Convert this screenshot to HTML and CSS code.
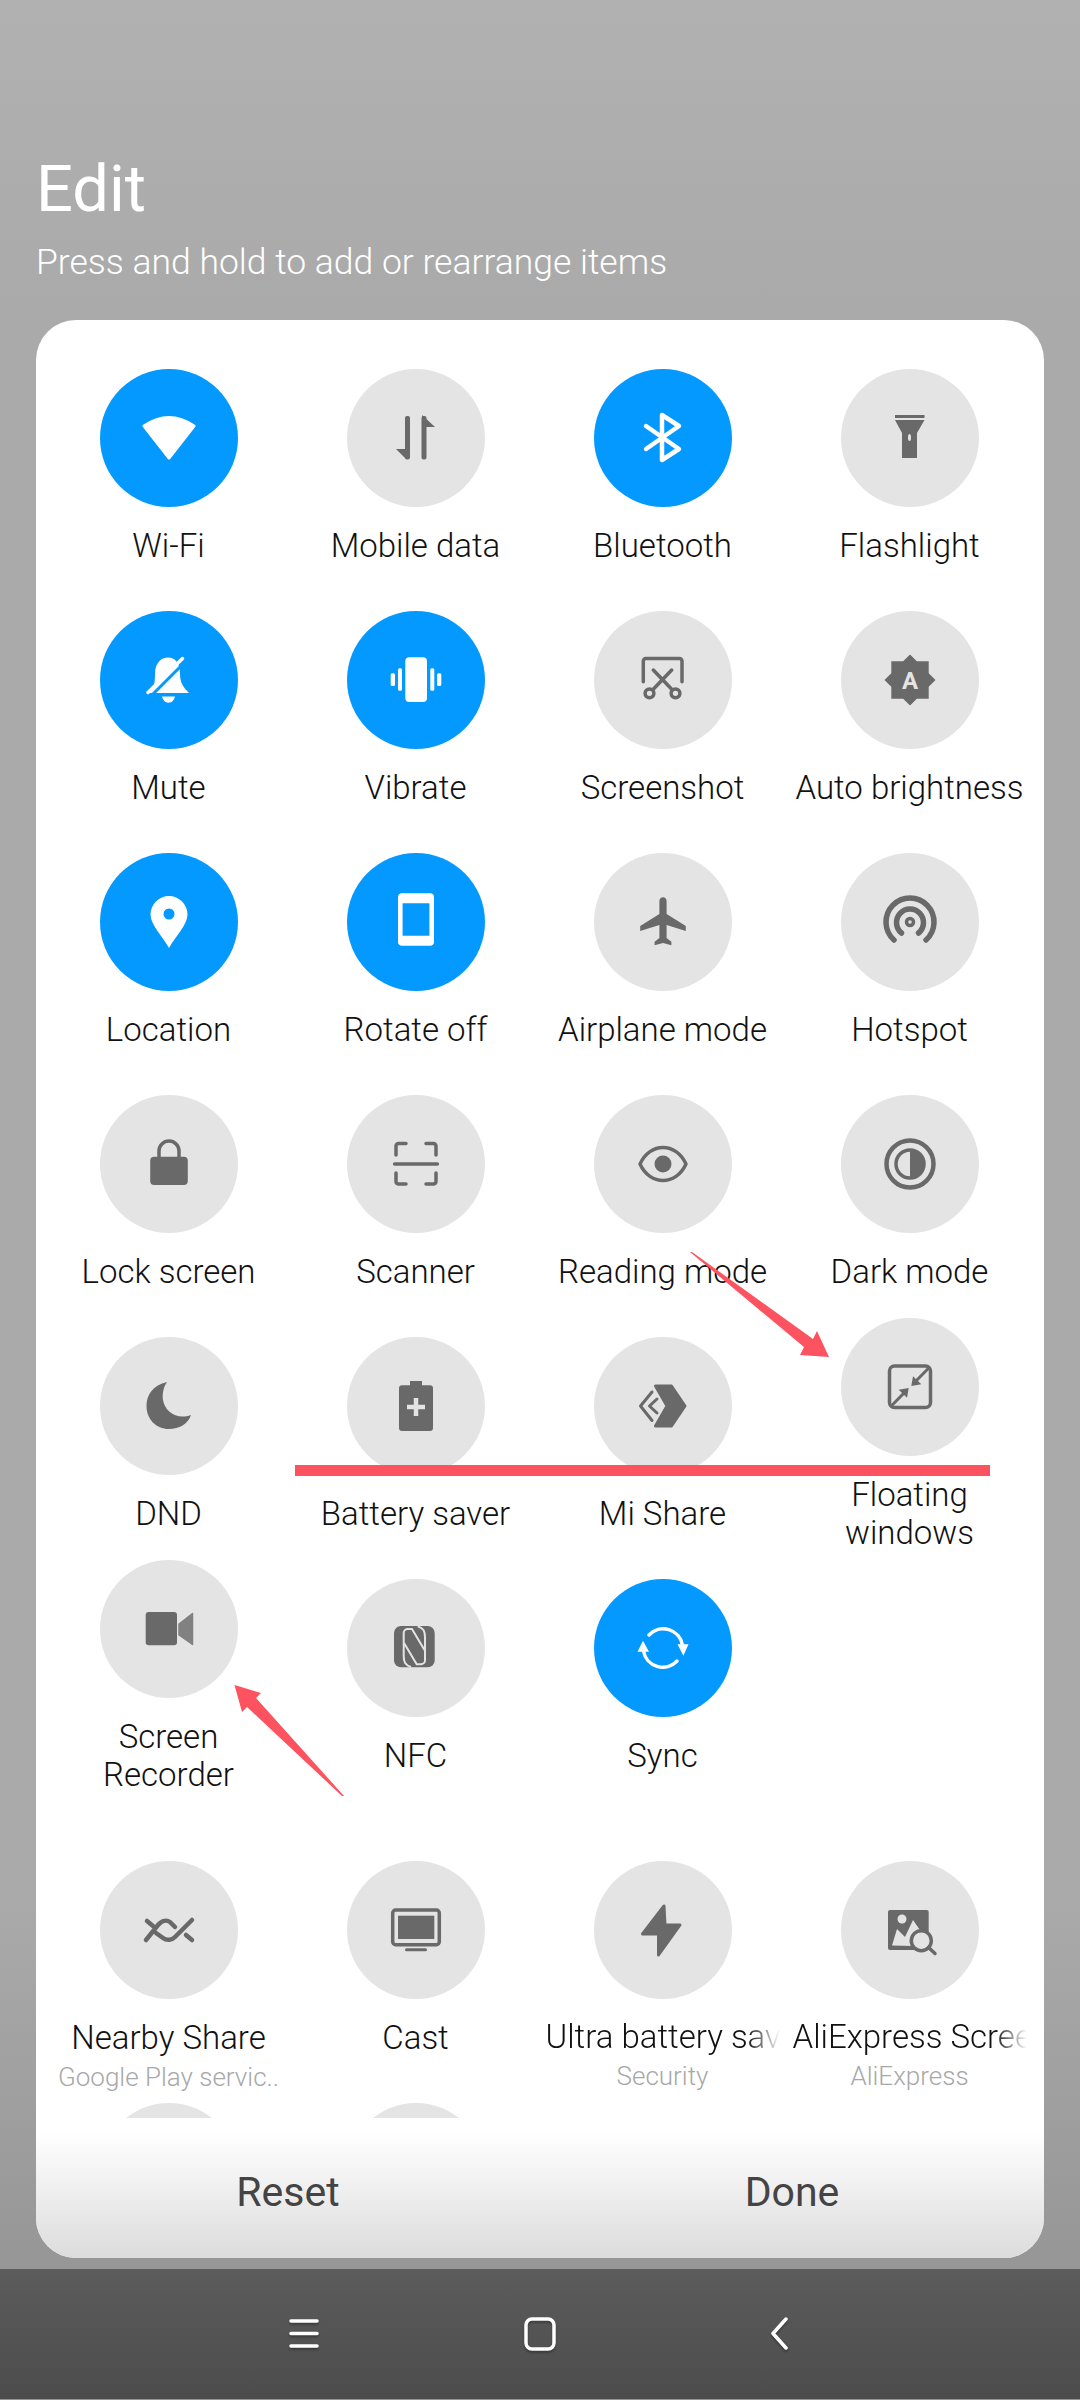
FILE: index.html
```html
<!DOCTYPE html>
<html lang="en">
<head>
    <meta charset="UTF-8">
    <meta name="viewport" content="width=device-width, initial-scale=1.0">
    <title>Edit quick settings</title>
    <link rel="stylesheet" href="styles.css">
</head>
<body>
    <div class="screen">
        <header class="head">
            <h1>Edit</h1>
            <p>Press and hold to add or rearrange items</p>
        </header>

        <main class="card">
            <div class="tiles">
                <div class="grid">
                    <div class="tile">
                        <div class="circle on">
                            <svg viewBox="0 0 60 60"><path class="solid round" d="M5 18 Q30 1 55 18 L30 50 Z"/></svg>
                        </div>
                        <div class="label">Wi-Fi</div>
                    </div>
                    <div class="tile">
                        <div class="circle">
                            <svg viewBox="0 0 60 60">
                                <rect class="solid" x="19" y="8" width="5" height="43.500" rx="2"/>
                                <path class="solid" d="M10 41 H20 V51 Z"/>
                                <rect class="solid" x="35.500" y="8" width="5" height="43.500" rx="2"/>
                                <path class="solid" d="M36 7 L49 19 H36 Z"/>
                            </svg>
                        </div>
                        <div class="label">Mobile data</div>
                    </div>
                    <div class="tile">
                        <div class="circle on">
                            <svg viewBox="0 0 60 60"><path class="line" d="M13 18 L46 41 L29 52 V7 L46 18 L13 41"/></svg>
                        </div>
                        <div class="label">Bluetooth</div>
                    </div>
                    <div class="tile">
                        <div class="circle">
                            <svg viewBox="0 0 60 60">
                                <rect class="solid" x="15" y="7" width="29.500" height="3"/>
                                <path class="solid" d="M15 12 H44.500 L37 25 V50 H22 V25 Z"/>
                                <ellipse class="cut" cx="29.500" cy="29.500" rx="1.500" ry="3.500"/>
                            </svg>
                        </div>
                        <div class="label">Flashlight</div>
                    </div>

                    <div class="tile">
                        <div class="circle on">
                            <svg viewBox="0 0 60 60">
                                <path class="solid" d="M11 43 C15 38 16 33 16 24 C16 13 22 7.500 29 7.500 C36 7.500 41 13 41 24 C41 33 45 38 50 43 Z"/>
                                <path class="gap" d="M12 46 L47 11"/>
                                <path class="line thin" d="M9 42.500 L43.500 8.500"/>
                                <path class="solid" d="M23 46.500 H36 C35 50 33 52.700 29.500 52.700 C26 52.700 24 50 23 46.500 Z"/>
                            </svg>
                        </div>
                        <div class="label">Mute</div>
                    </div>
                    <div class="tile">
                        <div class="circle on">
                            <svg viewBox="0 0 60 60">
                                <rect class="solid" x="19.300" y="7.300" width="21.700" height="44.700" rx="4"/>
                                <rect class="solid" x="12" y="18.300" width="4" height="22.400" rx="1.500"/>
                                <rect class="solid" x="44.300" y="18.300" width="4" height="22.400" rx="1.500"/>
                                <rect class="solid" x="4.700" y="23.300" width="4.300" height="12.700" rx="1.500"/>
                                <rect class="solid" x="51" y="23.300" width="4.300" height="12.700" rx="1.500"/>
                            </svg>
                        </div>
                        <div class="label">Vibrate</div>
                    </div>
                    <div class="tile">
                        <div class="circle">
                            <svg viewBox="0 0 60 60">
                                <path class="line thin" d="M10.300 31.700 V11 a2.500 2.500 0 0 1 2.500 -2.500 H46.500 a2.500 2.500 0 0 1 2.500 2.500 V31.700"/>
                                <path class="line thin" d="M20.300 20 L38.500 39 M38.700 20 L20.500 39"/>
                                <circle class="line thin" cx="16.500" cy="43.300" r="4.400"/>
                                <circle class="line thin" cx="42.500" cy="43.300" r="4.400"/>
                            </svg>
                        </div>
                        <div class="label">Screenshot</div>
                    </div>
                    <div class="tile">
                        <div class="circle">
                            <svg viewBox="0 0 60 60">
                                <path class="solid" d="M30 4.500 L36.800 11.300 H48.700 V23.200 L55.500 30 L48.700 36.800 V48.700 H36.800 L30 55.500 L23.200 48.700 H11.300 V36.800 L4.500 30 L11.300 23.200 V11.300 H23.200 Z"/>
                                <text class="glyph" x="30" y="38.500">A</text>
                            </svg>
                        </div>
                        <div class="label">Auto brightness</div>
                    </div>

                    <div class="tile">
                        <div class="circle on">
                            <svg viewBox="0 0 60 60">
                                <path class="solid" d="M30 56 C24 45 11.500 33 11.500 22.500 A18.500 18.500 0 0 1 48.500 22.500 C48.500 33 36 45 30 56 Z"/>
                                <circle class="cut" cx="30" cy="22" r="5.500"/>
                            </svg>
                        </div>
                        <div class="label">Location</div>
                    </div>
                    <div class="tile">
                        <div class="circle on">
                            <svg viewBox="0 0 60 60"><path class="solid" fill-rule="evenodd" d="M16 1.300 H44 a4 4 0 0 1 4 4 V49.700 a4 4 0 0 1 -4 4 H16 a4 4 0 0 1 -4 -4 V5.300 a4 4 0 0 1 4 -4 Z M16.600 11.300 V43.700 H43.400 V11.300 Z"/></svg>
                        </div>
                        <div class="label">Rotate off</div>
                    </div>
                    <div class="tile">
                        <div class="circle">
                            <svg viewBox="0 0 60 60"><path class="solid" transform="translate(2.400 .5) scale(2.400)" d="M21 16v-2l-8-5V3.500c0-.83-.67-1.500-1.500-1.500S10 2.670 10 3.500V9l-8 5v2l8-2.500V19l-2 1.500V22l3.500-1 3.500 1v-1.500L13 19v-5.500l8 2.500z"/></svg>
                        </div>
                        <div class="label">Airplane mode</div>
                    </div>
                    <div class="tile">
                        <div class="circle">
                            <svg viewBox="0 0 60 60">
                                <path class="line bold" d="M14 48 A24 24 0 1 1 46 48"/>
                                <path class="line bold" d="M21.500 41 A13.500 13.500 0 1 1 38.500 41"/>
                                <circle class="line thin" cx="30" cy="30" r="3.500"/>
                            </svg>
                        </div>
                        <div class="label">Hotspot</div>
                    </div>

                    <div class="tile">
                        <div class="circle">
                            <svg viewBox="0 0 60 60">
                                <path class="line thin" d="M20 24 V17 A10 10 0 0 1 40 17 V24"/>
                                <rect class="solid" x="11.200" y="22.800" width="37.600" height="28.200" rx="4"/>
                            </svg>
                        </div>
                        <div class="label">Lock screen</div>
                    </div>
                    <div class="tile">
                        <div class="circle">
                            <svg viewBox="0 0 60 60">
                                <path class="line thin" d="M10 21 V12 a2.500 2.500 0 0 1 2.500 -2.500 H20 M40 9.500 H47.500 a2.500 2.500 0 0 1 2.500 2.500 V21 M10 39 V47.500 a2.500 2.500 0 0 0 2.500 2.500 H20 M40 50 H47.500 a2.500 2.500 0 0 0 2.500 -2.500 V39 M8.600 30 H51.400"/>
                            </svg>
                        </div>
                        <div class="label">Scanner</div>
                    </div>
                    <div class="tile">
                        <div class="circle">
                            <svg viewBox="0 0 60 60">
                                <path class="line thin" d="M7 30 C12 19 21 13.500 30 13.500 C39 13.500 48 19 53 30 C48 41 39 46.500 30 46.500 C21 46.500 12 41 7 30 Z"/>
                                <circle class="solid" cx="30" cy="30" r="8.500"/>
                            </svg>
                        </div>
                        <div class="label">Reading mode</div>
                    </div>
                    <div class="tile">
                        <div class="circle">
                            <svg viewBox="0 0 60 60">
                                <circle class="line" cx="30" cy="30" r="23.500"/>
                                <circle class="line thin" cx="30" cy="30" r="14"/>
                                <path class="solid" d="M30 16 A14 14 0 0 1 30 44 Z"/>
                            </svg>
                        </div>
                        <div class="label">Dark mode</div>
                    </div>

                    <div class="tile">
                        <div class="circle">
                            <svg viewBox="0 0 60 60"><path class="solid" d="M28 6 C14 9 7.500 19 7.500 30 C7.500 43 17 53 30 53 C40 53 49 48 52 39 C38 44 26 36 24 24 C23 17 25 10 28 6 Z"/></svg>
                        </div>
                        <div class="label">DND</div>
                    </div>
                    <div class="tile">
                        <div class="circle">
                            <svg viewBox="0 0 60 60">
                                <path class="solid" d="M24 5 H36 V9.300 H44 a3 3 0 0 1 3 3 V52 a3 3 0 0 1 -3 3 H16 a3 3 0 0 1 -3 -3 V12.300 a3 3 0 0 1 3 -3 H24 Z"/>
                                <path class="cut-line" d="M30 22 V40 M21 31 H39"/>
                            </svg>
                        </div>
                        <div class="label">Battery saver</div>
                    </div>
                    <div class="tile">
                        <div class="circle">
                            <svg viewBox="0 0 60 60">
                                <path class="solid round" d="M22.500 10 H38.500 L52 30 L38.500 50 H22.500 L34 30 Z"/>
                                <path class="line slim" d="M19 16 L7.500 30 L19 44.500 M24 23 L16.500 30 L24 37"/>
                            </svg>
                        </div>
                        <div class="label">Mi Share</div>
                    </div>
                    <div class="tile lifted">
                        <div class="circle">
                            <svg viewBox="0 0 60 60">
                                <rect class="line thin" x="9.500" y="9" width="41" height="41.500" rx="5"/>
                                <path class="line slim" d="M12 48.300 L24 36 M48 11.700 L36 24"/>
                                <path class="solid" d="M18.700 32.700 L28.700 31 L27 40.700 Z M41.300 27.300 L31.300 29 L33 19.300 Z"/>
                            </svg>
                        </div>
                        <div class="label">Floating<br>windows</div>
                    </div>

                    <div class="tile lifted">
                        <div class="circle">
                            <svg viewBox="0 0 60 60">
                                <rect class="solid" x="6.700" y="13" width="31.300" height="33.300" rx="3"/>
                                <path class="solid faded round-thin" d="M40 25 L53.500 14.500 V45.500 L40 36 Z"/>
                            </svg>
                        </div>
                        <div class="label">Screen<br>Recorder</div>
                    </div>
                    <div class="tile">
                        <div class="circle">
                            <svg viewBox="0 0 60 60">
                                <rect class="solid" x="8" y="8" width="40.700" height="41.300" rx="7"/>
                                <path class="cut-line slim" d="M25 49 C19 47 17.700 44 17.700 38 V15 a4 4 0 0 1 4 -4 H26 L38.500 32 M31.700 8.300 C37.700 10.300 39 13.300 39 19.300 V42.300 a4 4 0 0 1 -4 4 H30.700 L18.200 25.300"/>
                            </svg>
                        </div>
                        <div class="label">NFC</div>
                    </div>
                    <div class="tile">
                        <div class="circle on">
                            <svg viewBox="0 0 60 60">
                                <path class="line thin" d="M16 17 A19.500 19.500 0 0 1 49.500 27 M44 43 A19.500 19.500 0 0 1 10.500 33"/>
                                <path class="solid" d="M10 22.700 L16 33.700 H4.500 Z M50.400 37.700 L44.500 26.300 H55.500 Z"/>
                            </svg>
                        </div>
                        <div class="label">Sync</div>
                    </div>
                </div>

                <div class="grid extra">
                    <div class="tile">
                        <div class="circle">
                            <svg viewBox="0 0 60 60"><path class="line" d="M7 40 L19 25 C23 20 28 20 31 22 L36 27 M17 33 L24 38 C28 41 33 40 36 37 L53 20 M8 21 L14 26 M47 35 L53 40"/></svg>
                        </div>
                        <div class="label">Nearby Share</div>
                        <div class="sub">Google Play servic..</div>
                    </div>
                    <div class="tile">
                        <div class="circle">
                            <svg viewBox="0 0 60 60">
                                <rect class="line thin" x="6.700" y="10" width="46.600" height="34.700" rx="3"/>
                                <rect class="solid" x="12" y="15.700" width="36.300" height="23.300"/>
                                <rect class="solid" x="19" y="48.300" width="22" height="3" rx="1.500"/>
                            </svg>
                        </div>
                        <div class="label">Cast</div>
                    </div>
                    <div class="tile">
                        <div class="circle">
                            <svg viewBox="0 0 60 60"><path class="solid round" d="M31 6 L9.500 34 H25.500 V55 L47 25 H32 Z"/></svg>
                        </div>
                        <div class="label fade">Ultra battery sav</div>
                        <div class="sub">Security</div>
                    </div>
                    <div class="tile">
                        <div class="circle">
                            <svg viewBox="0 0 60 60">
                                <rect class="solid" x="8" y="10" width="40.700" height="40" rx="2"/>
                                <circle class="cut" cx="22" cy="19" r="4.500"/>
                                <path class="cut" d="M12 45.500 L17 29 L25 37 L33 20 L42 33 L33 46 Z"/>
                                <circle class="line thin halo" cx="41.300" cy="40.700" r="10"/>
                                <path class="line thin" d="M48.500 47.500 L55 53.500"/>
                            </svg>
                        </div>
                        <div class="label fade">AliExpress Scree</div>
                        <div class="sub">AliExpress</div>
                    </div>

                    <div class="tile">
                        <div class="circle"></div>
                    </div>
                    <div class="tile">
                        <div class="circle"></div>
                    </div>
                </div>
            </div>

            <div class="actions">
                <button type="button" class="action">Reset</button>
                <button type="button" class="action">Done</button>
            </div>
        </main>

        <nav class="navbar">
            <svg viewBox="0 0 40 40"><path d="M7 9 H33 M7 21.500 H33 M7 34 H33"/></svg>
            <svg viewBox="0 0 40 40"><rect x="6" y="7" width="28" height="30" rx="6"/></svg>
            <svg viewBox="0 0 40 40"><path d="M30 7 L17 21.500 L30 36"/></svg>
        </nav>

        <!-- marks drawn over the screenshot -->
        <svg class="marks" viewBox="0 0 1080 2400">
            <rect x="295" y="1465" width="695" height="11"/>
            <path d="M690 1252 L692 1252 L813 1339 L817 1331 L829 1357 L800 1355 L804 1347 Z"/>
            <path d="M344 1796 L342 1796 L247 1707 L242 1712 L234.500 1685 L261 1693 L256 1698 Z"/>
        </svg>
    </div>
</body>
</html>
```

FILE: styles.css
```css
* {
    box-sizing: border-box;
}

body {
    margin: 0;
    font-family: Roboto, "Noto Sans", sans-serif;
}

.screen {
    position: relative;
    width: 1080px;
    height: 2400px;
    display: flex;
    flex-direction: column;
    background: linear-gradient(to bottom, #b1b1b1 0, #aaaaaa 300px, #aaaaaa 1900px, #969696 2270px);
    overflow: hidden;
}

.head {
    height: 320px;
    flex: none;
    padding: 147px 36px 0;
    color: #fff;
}

.head h1 {
    margin: 0;
    font-size: 65px;
    line-height: 84px;
    font-weight: 400;
}

.head p {
    margin: 9px 0 0;
    font-size: 35.500px;
    line-height: 44px;
    font-weight: 300;
}

.card {
    flex: none;
    height: 1938px;
    margin: 0 36px;
    display: flex;
    flex-direction: column;
    background-color: #fff;
    border-radius: 40px;
    overflow: hidden;
}

.tiles {
    height: 1798px;
    padding: 49px 11px 0 9px;
    overflow: hidden;
    flex: none;
}

.grid {
    display: grid;
    grid-template-columns: repeat(4, 247px);
    grid-auto-rows: 242px;
}

.extra {
    margin-top: 40px;
}

.tile {
    display: flex;
    flex-direction: column;
    align-items: center;
}

.lifted {
    margin-top: -19px;
}

.circle {
    width: 138px;
    height: 138px;
    flex: none;
    display: flex;
    align-items: center;
    justify-content: center;
    border-radius: 50%;
    background-color: #e4e4e4;
    color: #696969;
    --circle-bg: #e4e4e4;
}

.circle.on {
    background-color: #0499ff;
    color: #fff;
    --circle-bg: #0499ff;
}

.circle svg {
    width: 60px;
    height: 60px;
}

.solid {
    fill: currentColor;
}

.round {
    stroke: currentColor;
    stroke-width: 3;
    stroke-linejoin: round;
}

.round-thin {
    stroke: currentColor;
    stroke-width: 1.500;
    stroke-linejoin: round;
}

.line {
    fill: none;
    stroke: currentColor;
    stroke-width: 4.500;
    stroke-linecap: round;
    stroke-linejoin: round;
}

.line.bold {
    stroke-width: 5.500;
}

.line.thin {
    stroke-width: 3.500;
}

.line.slim {
    stroke-width: 3;
}

.halo {
    fill: var(--circle-bg);
}

.faded {
    opacity: 0.8;
}

.cut {
    fill: var(--circle-bg);
}

.cut-line {
    fill: none;
    stroke: var(--circle-bg);
    stroke-width: 4.500;
}

.cut-line.slim {
    stroke-width: 2;
}

.gap {
    stroke: var(--circle-bg);
    stroke-width: 3;
}

.glyph {
    font-family: Roboto, sans-serif;
    font-size: 24px;
    font-weight: 700;
    text-anchor: middle;
    fill: var(--circle-bg);
}

.label {
    width: 234px;
    margin-top: 20px;
    font-size: 33px;
    line-height: 38px;
    font-weight: 300;
    text-align: center;
    color: #111;
}

.fade {
    margin-top: 19px;
    white-space: nowrap;
    overflow: hidden;
    text-align: left;
    -webkit-mask-image: linear-gradient(to right, #000 86%, transparent 100%);
    mask-image: linear-gradient(to right, #000 86%, transparent 100%);
}

.sub {
    width: 234px;
    font-size: 26px;
    line-height: 40px;
    font-weight: 300;
    text-align: center;
    white-space: nowrap;
    color: #a8a8a8;
}

.actions {
    flex: 1;
    display: grid;
    grid-template-columns: 504px 504px;
    align-items: center;
    background: linear-gradient(to bottom, #fff 0, #fff 14px, #dcdcdc 100%);
}

.action {
    padding: 8px 0 0;
    border: none;
    background: none;
    font-family: Roboto, sans-serif;
    font-size: 41px;
    color: #444;
}

.navbar {
    height: 130px;
    margin-top: 11px;
    flex: none;
    display: flex;
    justify-content: center;
    align-items: center;
    gap: 196px;
    padding-bottom: 4px;
    background: linear-gradient(to bottom, #5c5c5c, #4c4c4c);
}

.navbar svg {
    width: 40px;
    height: 40px;
    fill: none;
    stroke: #fff;
    stroke-width: 3.500;
    stroke-linecap: round;
    stroke-linejoin: round;
    filter: drop-shadow(0 2px 1px rgba(0, 0, 0, 0.3));
}

.marks {
    position: absolute;
    top: 0;
    left: 0;
    width: 1080px;
    height: 2400px;
    fill: #fd5360;
    pointer-events: none;
}
```
